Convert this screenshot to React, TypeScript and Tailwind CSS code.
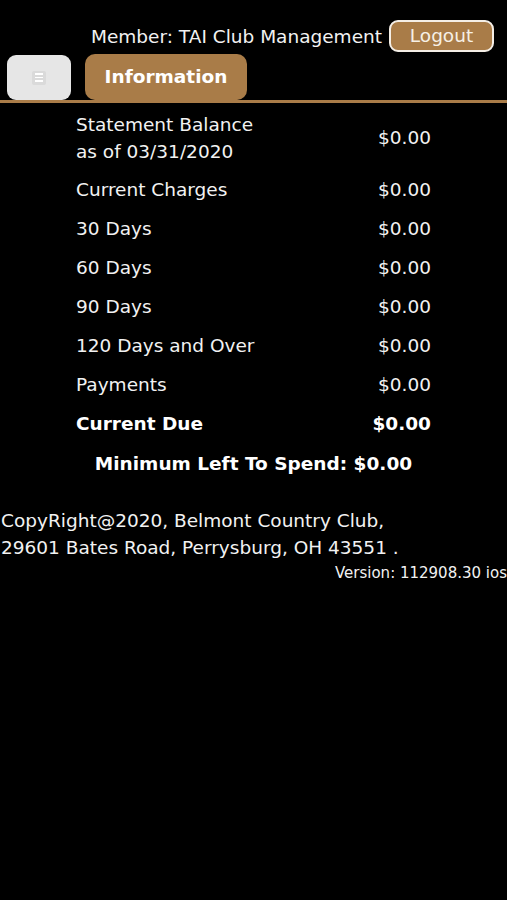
const ROWS = [
  {label: 'Current Charges', value: '$0.00'},
  {label: '30 Days', value: '$0.00'},
  {label: '60 Days', value: '$0.00'},
  {label: '90 Days', value: '$0.00'},
  {label: '120 Days and Over', value: '$0.00'},
  {label: 'Payments', value: '$0.00'},
];

export default function App() {
  return (
    <div className="min-h-[900px] bg-black text-[#f2f2f2] font-['DejaVu_Sans',sans-serif] text-[18.5px]">
      <header className="pt-[20px]">
        <div className="flex items-center justify-end pr-[13px] h-[32px]">
          <span className="mr-[7px] leading-none pt-[3px]">Member: TAI Club Management</span>
          <button className="h-[32px] w-[105px] rounded-[9px] border-2 border-[#f4eee6] bg-[#a97c48] text-[18.5px] text-[#f6f0e6] leading-none">
            Logout
          </button>
        </div>

        <nav className="flex items-end gap-[14px] pl-[7px] mt-[2px]">
          <button className="h-[45px] w-[64px] rounded-[9px] bg-[#e6e6e6] flex items-center justify-center">
            <span className="w-[14px] h-[14px] bg-[#dadada] rounded-[2px] flex flex-col items-center justify-center gap-[2px]">
              <span className="block w-[8px] h-[1.5px] bg-white" />
              <span className="block w-[8px] h-[1.5px] bg-white" />
              <span className="block w-[8px] h-[1.5px] bg-white" />
            </span>
          </button>
          <div className="h-[46px] w-[162px] rounded-[10px] bg-[#a97c48] flex items-center justify-center font-bold text-white">
            Information
          </div>
        </nav>
        <div className="h-[3px] bg-[#a97c48]" />
      </header>

      <main className="px-[76px] pt-[8px]">
        <div className="flex items-center justify-between h-[54px] mb-[5px]">
          <div className="leading-[27px]">
            <div>Statement Balance</div>
            <div>as of 03/31/2020</div>
          </div>
          <span>$0.00</span>
        </div>
        {ROWS.map((row) => (
          <div key={row.label} className="flex items-center justify-between h-[39px]">
            <span>{row.label}</span>
            <span>{row.value}</span>
          </div>
        ))}
        <div className="flex items-center justify-between h-[39px] font-bold text-white">
          <span>Current Due</span>
          <span>$0.00</span>
        </div>
        <div className="text-center font-bold text-white h-[39px] flex items-center justify-center pt-[2px]">
          Minimum Left To Spend: $0.00
        </div>
      </main>

      <footer className="mt-[25px]">
        <div className="pl-[1px] leading-[27px]">
          <div>CopyRight@2020, Belmont Country Club,</div>
          <div>29601 Bates Road, Perrysburg, OH 43551 .</div>
        </div>
        <div className="text-right text-[15px] leading-[24px]">Version: 112908.30 ios</div>
      </footer>
    </div>
  );
}
